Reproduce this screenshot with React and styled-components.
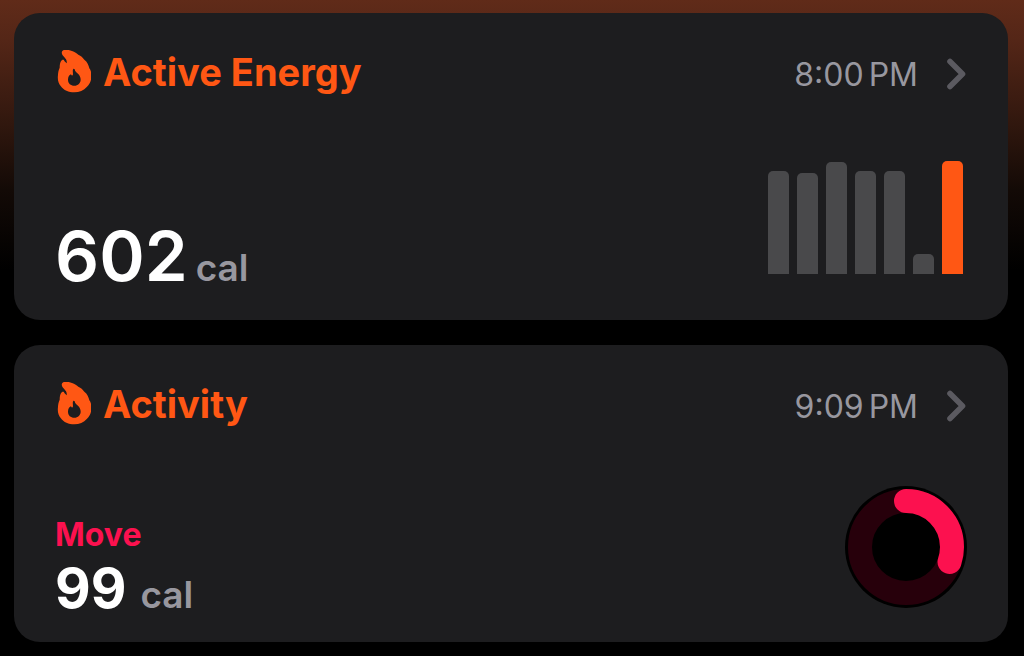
import styled, { createGlobalStyle } from 'styled-components';

const GlobalStyle = createGlobalStyle`
  * {
    box-sizing: border-box;
  }

  body {
    margin: 0;
    background-color: black;
    font-family: Inter, "Liberation Sans", sans-serif;
  }
`;

const Page = styled.main`
  display: flex;
  flex-direction: column;
  gap: 25px;
  min-height: 100vh;
  padding: 13px 16px 14px 14px;
  background: linear-gradient(#602b19 0, #542617 40px, #30170e 125px, #130a06 190px, #000 270px) no-repeat black;
`;

const Card = styled.section`
  display: flex;
  flex-direction: column;
  justify-content: space-between;
  min-height: ${props => props.$height}px;
  padding: 35px 41px 22px;
  border-radius: 26px;
  background-color: #1d1d1f;
`;

const Header = styled.header`
  display: flex;
  align-items: center;
  justify-content: space-between;
`;

const Title = styled.h2`
  display: flex;
  align-items: center;
  gap: 12px;
  margin: 0;
  color: #ff5714;
  font-size: 38px;
  line-height: 46px;
  font-weight: 700;
`;

const DetailsButton = styled.button`
  display: flex;
  align-items: center;
  gap: 28px;
  padding: 6px 0 0;
  border: none;
  background: none;
  color: #98979f;
  font-family: inherit;
  font-size: 32px;
  line-height: 42px;
  cursor: pointer;
`;

const Time = styled.span`
  display: flex;
  gap: 5px;
`;

const Body = styled.div`
  display: flex;
  align-items: flex-end;
  justify-content: space-between;
`;

const Label = styled.h3`
  margin: 0;
  color: #fc114f;
  font-size: 32px;
  line-height: 42px;
  font-weight: 700;
`;

const Reading = styled.p`
  display: flex;
  align-items: baseline;
  gap: ${props => (props.$large ? 8 : 14)}px;
  margin: 0;
  color: white;
  font-size: ${props => (props.$large ? 69 : 55)}px;
  line-height: ${props => (props.$large ? 84 : 64)}px;
  font-weight: ${props => (props.$large ? 600 : 700)};
`;

const Unit = styled.span`
  color: #98979f;
  font-size: 37px;
  line-height: 46px;
  font-weight: 600;
`;

const Bars = styled.div`
  display: grid;
  grid-template-columns: repeat(7, 21px);
  align-items: end;
  gap: 8px;
  height: 113px;
  margin: 0 4px 24px 0;
`;

const Bar = styled.div`
  border-radius: 5px 5px 0 0;
  background-color: ${props => (props.$today ? '#ff5714' : '#49494b')};
`;

const Ring = styled.svg`
  margin-bottom: 12px;
`;

const days = [103, 101, 112, 103, 103, 20, 113];

const FlameIcon = () => (
  <svg width="36" height="44" viewBox="15 30 108 132" aria-hidden="true">
    <path
      fill="#ff5714"
      fillRule="evenodd"
      d="M37 33C41 27 57 29 66 33C74 36 81 40 85 44C93 47 98 52 103 59C112 66 116 75 118 85C123 91 125 101 124 110C124 122 119 132 111 140C101 151 88 157 73 157C56 157 41 151 32 138C25 130 22 117 24 105C24 97 26 90 29 83C29 73 31 64 36 60C40 58 43 60 43 63L50 70C51 66 50 62 48 58C46 54 42 50 39 47C35 43 34 37 37 33ZM70 87C67 90 69 98 69 103C68 108 65 108 63 103C57 105 54 112 54 119C54 130 62 137 73 137C84 137 92 129 92 119C92 111 89 106 84 101C79 98 75 94 74 88C73 86 71 86 70 87Z"
    />
  </svg>
);

const ChevronIcon = () => (
  <svg width="21" height="34" viewBox="0 0 21 34" fill="none" aria-hidden="true">
    <path d="M4 3.5L16.5 16L4 28.5" stroke="#5b5a60" strokeWidth="5.6" strokeLinecap="round" strokeLinejoin="round" />
  </svg>
);

const MoveRing = ({ progress }) => {
  const length = 2 * Math.PI * 46;

  return (
    <Ring width="122" height="122" viewBox="0 0 122 122" fill="none" role="img" aria-label="Move ring">
      <circle cx="61" cy="61" r="61" fill="black" />
      <circle cx="61" cy="61" r="46" stroke="#27000b" strokeWidth="24" />
      <circle
        cx="61"
        cy="61"
        r="46"
        stroke="#fc114f"
        strokeWidth="24"
        strokeLinecap="round"
        strokeDasharray={`${length * progress} ${length}`}
        transform="rotate(-90 61 61)"
      />
    </Ring>
  );
};

const CardHeader = ({ title, time }) => (
  <Header>
    <Title>
      <FlameIcon />
      {title}
    </Title>
    <DetailsButton type="button">
      <Time>
        <span>{time}</span>
        <span>PM</span>
      </Time>
      <ChevronIcon />
    </DetailsButton>
  </Header>
);

const App = () => {
  return (
    <>
      <GlobalStyle />
      <Page>
        <Card $height={307}>
          <CardHeader title="Active Energy" time="8:00" />
          <Body>
            <Reading $large>
              602 <Unit>cal</Unit>
            </Reading>
            <Bars>
              {days.map((height, index) => (
                <Bar key={index} $today={index === days.length - 1} style={{ height }} />
              ))}
            </Bars>
          </Body>
        </Card>

        <Card $height={297}>
          <CardHeader title="Activity" time="9:09" />
          <Body>
            <div>
              <Label>Move</Label>
              <Reading>
                99 <Unit>cal</Unit>
              </Reading>
            </div>
            <MoveRing progress={0.302} />
          </Body>
        </Card>
      </Page>
    </>
  );
};

export default App;
